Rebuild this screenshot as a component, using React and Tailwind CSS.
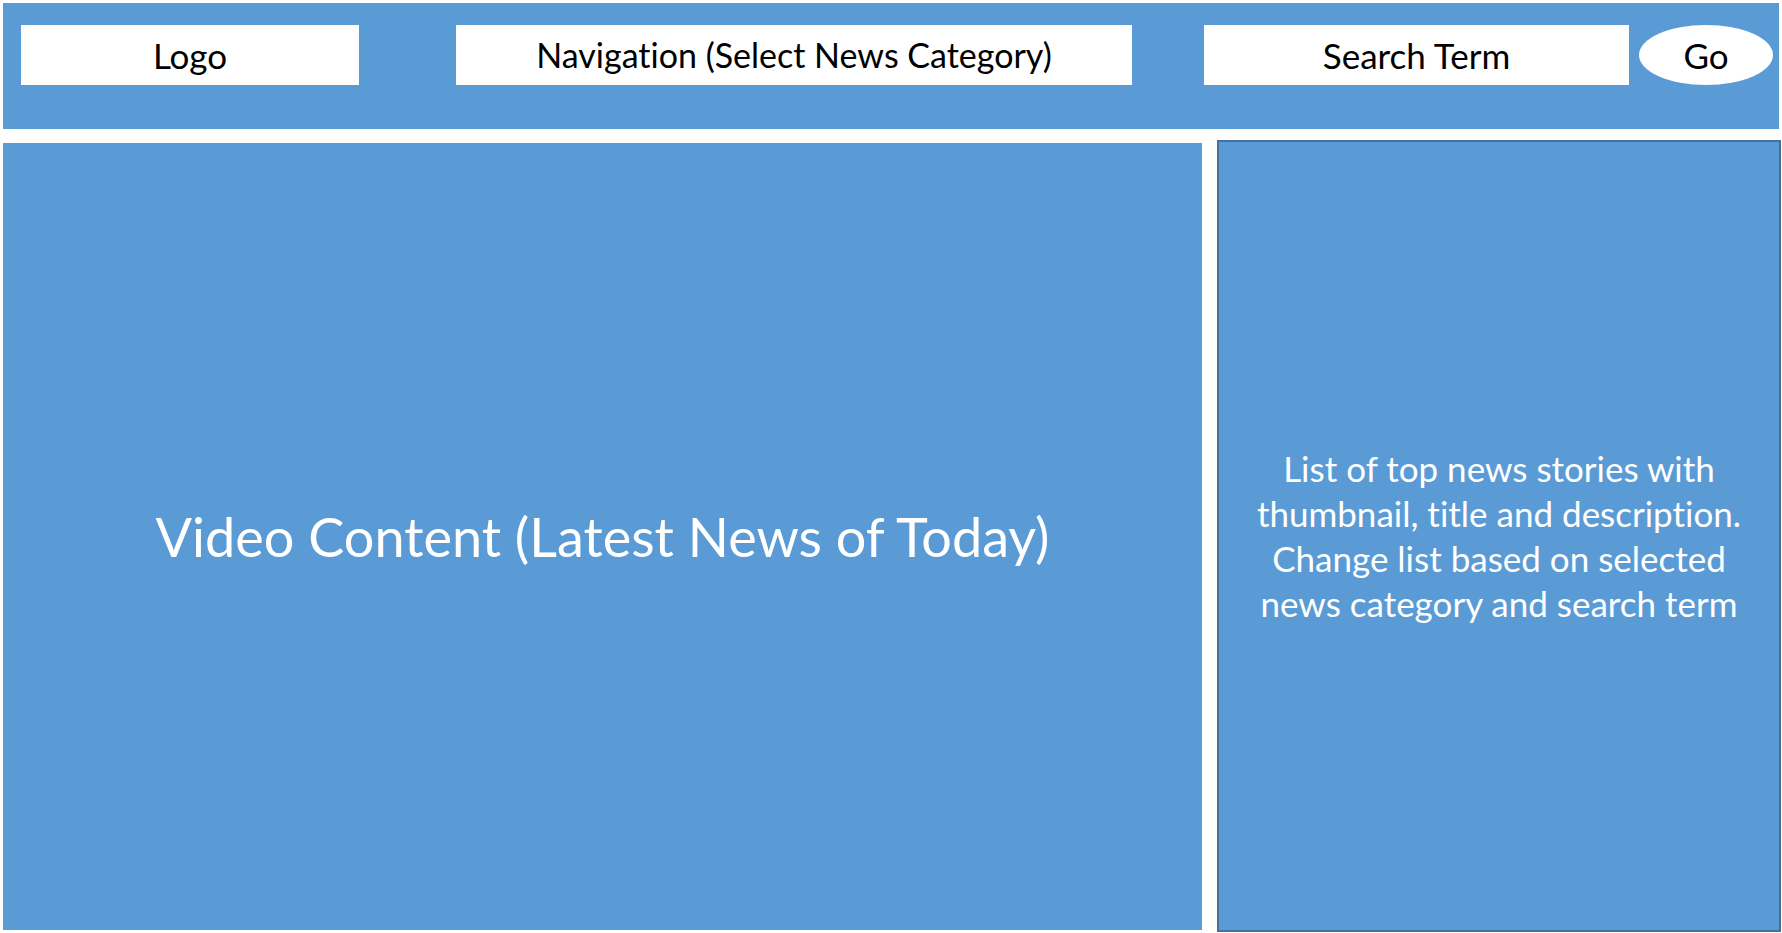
const FONT = "font-['Lato',_'Open_Sans',_sans-serif] [font-variant-ligatures:none]";

const HeaderBox = ({ className, children, size = "text-[35px]" }) => (
    <div className={`h-[60px] bg-white flex items-center justify-center text-black leading-none ${size} ${className}`}>
        {children}
    </div>
);

const App = () => {
    return (
        <div className={`w-[1782px] h-[933px] bg-white overflow-hidden ${FONT}`}>
            {/* Header bar */}
            <div className="mt-[3px] ml-[3px] w-[1776px] h-[126px] bg-[#5b9bd5] flex items-start pt-[22px]">
                <HeaderBox className="ml-[18px] w-[338px]">Logo</HeaderBox>
                <HeaderBox className="ml-[97px] w-[676px]" size="text-[34px]">Navigation (Select News Category)</HeaderBox>
                <HeaderBox className="ml-[72px] w-[425px]">Search Term</HeaderBox>
                <HeaderBox className="ml-[10px] w-[134px] rounded-[50%]">Go</HeaderBox>
            </div>

            {/* Main content */}
            <div className="flex items-start">
                <div className="mt-[14px] ml-[3px] w-[1199px] h-[787px] bg-[#5b9bd5] flex items-center justify-center">
                    <span className="text-white text-[54px] leading-none">Video Content (Latest News of Today)</span>
                </div>
                <div className="mt-[11px] ml-[15px] w-[564px] h-[792px] bg-[#5b9bd5] border-2 border-[#41719c] flex items-center justify-center">
                    <p className="w-[505px] text-white text-[35px] leading-[45px] text-center">
                        List of top news stories with thumbnail, title and description. Change list based on selected news category and search term
                    </p>
                </div>
            </div>
        </div>
    );
};

export default App;
